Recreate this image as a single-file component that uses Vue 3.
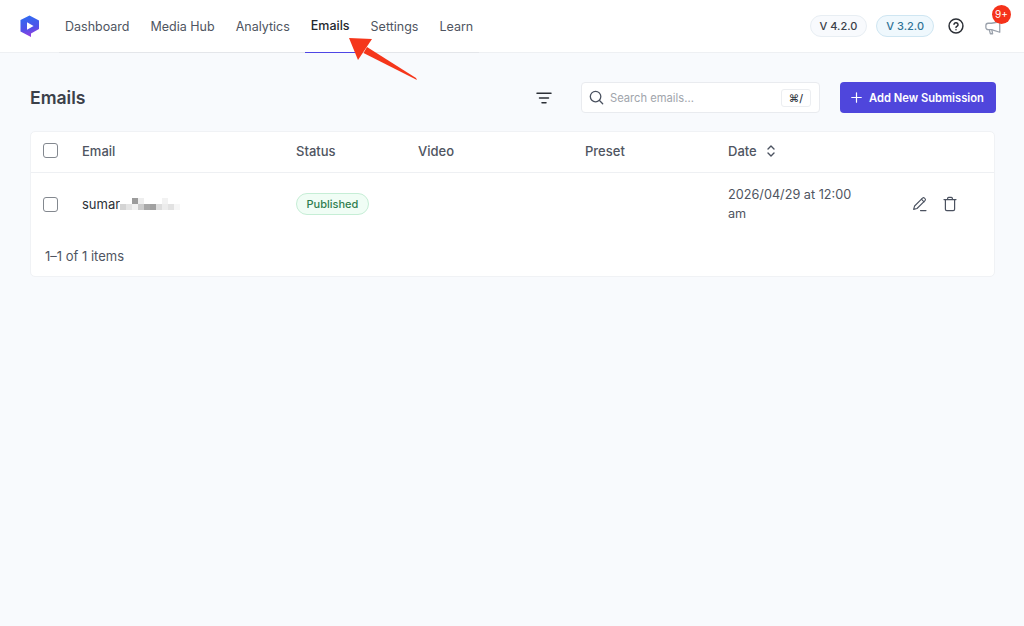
<template>
  <div class="page">
    <header class="topbar">
      <svg class="logo" viewBox="0 0 20 22" width="20" height="22">
        <defs>
          <linearGradient id="logoFill" x1="0.3" y1="0" x2="0.5" y2="1">
            <stop offset="0" stop-color="#2f6cf2" />
            <stop offset="0.6" stop-color="#4f52e8" />
            <stop offset="1" stop-color="#9a3de0" />
          </linearGradient>
        </defs>
        <path d="M.5 5 9.5.5 19 5.5V14l-8 4.5V22L.5 16.5z" fill="url(#logoFill)" />
        <path d="M7 7.2 13.6 11 7 14.8z" fill="#fff" />
      </svg>
      <nav class="nav">
        <a v-for="item in navItems" :key="item" class="nav-item" :class="{ active: item === 'Emails' }">{{ item }}</a>
      </nav>
      <div class="top-right">
        <span class="version">V 4.2.0</span>
        <span class="version blue">V 3.2.0</span>
        <svg class="help" viewBox="0 0 24 24" width="16" height="16" fill="none" stroke="#2b2f36" stroke-width="2.2" stroke-linecap="round">
          <circle cx="12" cy="12" r="10.4" />
          <path d="M8.9 9.2a3.2 3.2 0 0 1 6.2 1c0 2.1-3.1 2.6-3.1 4" />
          <path d="M12 17.6h.01" />
        </svg>
        <div class="bell">
          <svg viewBox="0 0 24 24" width="18" height="18" fill="none" stroke="#9aa1ab" stroke-width="1.7" stroke-linejoin="round" stroke-linecap="round">
            <path d="M21 5v14l-11-3.5H5.5a3 3 0 0 1-3-3V10a3 3 0 0 1 3-3H10z" />
            <path d="M7 15.5l1.5 5.5h3l-1-5" />
          </svg>
          <span class="badge">9+</span>
        </div>
      </div>
    </header>

    <main class="content">
      <div class="toolbar">
        <h1>Emails</h1>
        <div class="tools">
          <svg class="filter" viewBox="0 0 16 12" width="16" height="12" fill="none" stroke="#2b2f36" stroke-width="1.5" stroke-linecap="round">
            <path d="M1 1.2h14M3.5 6h9M6 10.8h4" />
          </svg>
          <div class="search">
            <svg viewBox="0 0 16 16" width="15" height="15" fill="none" stroke="#4b5260" stroke-width="1.4" stroke-linecap="round">
              <circle cx="7" cy="7" r="5.6" />
              <path d="m11.2 11.2 3.4 3.4" />
            </svg>
            <span class="placeholder">Search emails...</span>
            <span class="kbd">⌘/</span>
          </div>
          <button class="add-btn">
            <svg viewBox="0 0 12 12" width="11" height="11" fill="none" stroke="#fff" stroke-width="1.3" stroke-linecap="round">
              <path d="M6 .8v10.4M.8 6h10.4" />
            </svg>
            Add New Submission
          </button>
        </div>
      </div>

      <div class="card">
        <div class="row head">
          <span class="checkbox"></span>
          <span>Email</span>
          <span>Status</span>
          <span>Video</span>
          <span>Preset</span>
          <span class="date-head">
            Date
            <svg viewBox="0 0 10 14" width="10" height="14" fill="none" stroke="#4b5260" stroke-width="1.4" stroke-linecap="round" stroke-linejoin="round">
              <path d="M2 5 5 2l3 3M2 9l3 3 3-3" />
            </svg>
          </span>
          <span></span>
        </div>
        <div class="row body">
          <span class="checkbox"></span>
          <span class="email">sumar<span class="blur">
            <i v-for="(b, i) in blurBlocks" :key="i" :style="{ background: b }"></i>
          </span></span>
          <span><span class="status">Published</span></span>
          <span></span>
          <span></span>
          <span class="date">2026/04/29 at 12:00 am</span>
          <span class="actions">
            <svg viewBox="0 0 16 16" width="16" height="16" fill="none" stroke="#4b5260" stroke-width="1.1" stroke-linecap="round" stroke-linejoin="round">
              <path d="M1.6 13.4 2.6 10l7.9-7.9a1.3 1.3 0 0 1 2 0l.5.5a1.3 1.3 0 0 1 0 2L5 12.5z" />
              <path d="M9.4 3.2l2.6 2.6M8.5 14.6h5.5" />
            </svg>
            <svg viewBox="0 0 16 16" width="16" height="16" fill="none" stroke="#4b5260" stroke-width="1.2" stroke-linecap="round" stroke-linejoin="round">
              <path d="M2 3.6h12M5.6 3.6V2.4c0-.6.4-1 1-1h2.8c.6 0 1 .4 1 1v1.2M3.4 3.6v9.6c0 .8.6 1.4 1.4 1.4h6.4c.8 0 1.4-.6 1.4-1.4V3.6" />
            </svg>
          </span>
        </div>
        <div class="count">1–1 of 1 items</div>
      </div>
    </main>

    <svg class="arrow" viewBox="0 0 80 50" width="80" height="50">
      <path d="M76 42 77 44 23.5 17 27 11z" fill="#f5361b" />
      <path d="M9 2 32 3 18 24z" fill="#f5361b" />
    </svg>
  </div>
</template>

<script setup>
const navItems = ['Dashboard', 'Media Hub', 'Analytics', 'Emails', 'Settings', 'Learn']

// pixelated part of the address, two rows of ten
const blurBlocks = [
  '#ffffff', '#ffffff', '#9c9c9c', '#eeeeee', '#ffffff', '#ffffff', '#ffffff', '#f2f2f2', '#ffffff', '#ffffff',
  '#d4d4d4', '#e4e4e4', '#f2f2f2', '#cccccc', '#a8a8a8', '#a0a0a0', '#dddddd', '#ececec', '#e2e2e2', '#f6f6f6'
]
</script>

<style>
html,
body {
  margin: 0;
  background: #f8fafd;
}
</style>

<style scoped>
.page {
  position: relative;
  width: 1024px;
  height: 626px;
  overflow: hidden;
  background: #f8fafd;
  font-family: Inter, "Liberation Sans", sans-serif;
  color: #3f4550;
}

.topbar {
  display: flex;
  align-items: center;
  height: 53px;
  padding: 0 22px 0 20px;
  background: #fff;
  border-bottom: 1px solid #eef0f3;
  box-sizing: border-box;
}

.logo {
  flex: none;
}

.nav {
  display: flex;
  align-self: stretch;
  margin-left: 19px;
  height: 53px;
  border-bottom: 1px solid #e4e6ea;
  box-sizing: border-box;
}

.nav-item {
  display: flex;
  align-items: center;
  padding: 0 6px;
  margin-right: 9px;
  font-size: 12.5px;
  color: #4f5561;
  box-sizing: border-box;
  height: 53px;
  padding-bottom: 1px;
}

.nav-item:last-child {
  margin-right: 0;
}

.nav-item.active {
  color: #23272e;
  font-weight: 500;
  border-bottom: 1px solid #4f46e5;
}

.top-right {
  display: flex;
  align-items: center;
  margin-left: auto;
}

.version {
  height: 22px;
  line-height: 20px;
  padding: 0 9px;
  border: 1px solid #e8eef3;
  border-radius: 11px;
  background: #f8fafd;
  font-size: 11px;
  font-weight: 500;
  color: #3a3f48;
  box-sizing: border-box;
  margin-right: 9px;
}

.version.blue {
  background: #eff8fd;
  border-color: #cfe6f2;
  color: #2f7396;
}

.help {
  margin-left: 5px;
}

.bell {
  position: relative;
  display: flex;
  margin-left: 20px;
  margin-top: 1px;
}

.badge {
  position: absolute;
  top: -13px;
  left: 8px;
  width: 19px;
  height: 19px;
  line-height: 19px;
  text-align: center;
  border-radius: 50%;
  background: #f5321a;
  color: #fff;
  font-size: 10px;
}

.content {
  padding: 0 28px 0 30px;
}

.toolbar {
  display: flex;
  align-items: center;
  justify-content: space-between;
  padding: 29px 0 18px;
}

h1 {
  margin: 0;
  font-size: 17.6px;
  font-weight: 600;
  color: #3b4049;
}

.tools {
  display: flex;
  align-items: center;
}

.filter {
  margin-right: 29px;
}

.search {
  display: flex;
  align-items: center;
  width: 239px;
  height: 31px;
  padding: 0 8px 0 7px;
  margin-right: 20px;
  background: #fff;
  border: 1px solid #e9ebef;
  border-radius: 4px;
  box-sizing: border-box;
}

.placeholder {
  margin-left: 6px;
  font-size: 11.2px;
  color: #a1a5ac;
}

.kbd {
  margin-left: auto;
  width: 30px;
  height: 18px;
  line-height: 17px;
  text-align: center;
  font-size: 10.5px;
  font-weight: 500;
  color: #333842;
  border: 1px solid #eceef1;
  border-radius: 3px;
  box-sizing: border-box;
}

.add-btn {
  display: flex;
  align-items: center;
  gap: 7px;
  width: 156px;
  height: 31px;
  padding: 0 0 0 11px;
  border: 0;
  border-radius: 4px;
  background: #4f46dc;
  color: #fff;
  font-family: inherit;
  font-size: 11.2px;
  font-weight: 600;
  box-sizing: border-box;
}

.card {
  width: 965px;
  height: 146px;
  background: #fff;
  border: 1px solid #f0f2f5;
  border-radius: 5px;
  box-sizing: border-box;
}

.row {
  display: grid;
  grid-template-columns: 51px 214px 122px 167px 143px 184px 1fr;
  align-items: center;
  font-size: 13px;
}

.row.head {
  height: 41px;
  box-sizing: border-box;
  padding-bottom: 3px;
  border-bottom: 1px solid #eef0f3;
  color: #4f5561;
  font-weight: 500;
}

.row.body {
  height: 62px;
}

.checkbox {
  display: block;
  width: 15px;
  height: 15px;
  margin-left: 12px;
  border: 1px solid #83888f;
  border-radius: 3px;
  box-sizing: border-box;
}

.date-head {
  display: flex;
  align-items: center;
  gap: 9px;
}

.email {
  display: flex;
  align-items: center;
  color: #2c3038;
}

.blur {
  display: grid;
  grid-template-columns: repeat(10, 6px);
  grid-auto-rows: 6px;
  margin-top: -1px;
}

.blur i {
  display: block;
}

.status {
  display: inline-block;
  height: 22px;
  line-height: 20px;
  padding: 0 9.5px;
  border: 1px solid #c6eed6;
  border-radius: 11px;
  background: #f0fdf5;
  color: #2f7d4f;
  font-size: 11px;
  font-weight: 500;
  box-sizing: border-box;
}

.date {
  line-height: 19px;
  font-size: 12.7px;
  color: #4f5561;
  width: 140px;
}

.actions {
  display: flex;
  gap: 14px;
}

.count {
  padding: 13px 14px 0;
  font-size: 13px;
  color: #4f5561;
}

.arrow {
  position: absolute;
  left: 340px;
  top: 36px;
}
</style>
